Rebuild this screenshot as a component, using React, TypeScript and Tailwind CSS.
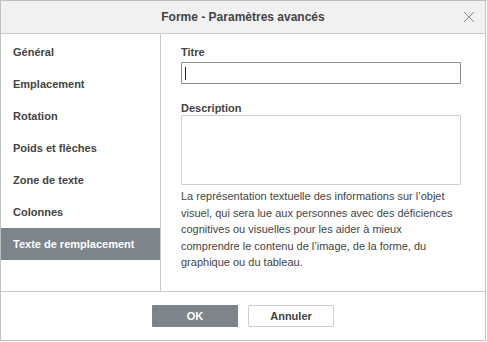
import React from 'react';

const ITEMS = [
  'Général',
  'Emplacement',
  'Rotation',
  'Poids et flèches',
  'Zone de texte',
  'Colonnes',
  'Texte de remplacement',
];

export default function App() {
  const selected = 6;

  return (
    <div className="w-[487px] h-[342px] bg-white" style={{ fontFamily: '"Liberation Sans", Arial, sans-serif' }}>
      <div className="w-[486px] h-[341px] border border-[#c0c0c0] flex flex-col text-[#444]">
        {/* Header */}
        <div className="relative h-[33px] shrink-0 bg-[#f1f1f1] border-b border-[#cbcbcb] flex items-center justify-center">
          <span className="text-[12px] font-bold leading-[14px]">Forme - Paramètres avancés</span>
          <svg className="absolute left-[461px] top-[9px]" width="14" height="14" viewBox="0 0 14 14">
            <path d="M2 2 L12 12 M12 2 L2 12" stroke="#8b8b8b" strokeWidth="1" fill="none" />
          </svg>
        </div>

        {/* Body */}
        <div className="flex flex-1 min-h-0">
          <div className="w-[160px] shrink-0 border-r border-[#cbcbcb] pt-[2px]">
            {ITEMS.map((item, i) => (
              <div
                key={item}
                className={`h-[32px] flex items-center pl-[12px] text-[11px] font-bold ${
                  i === selected ? 'bg-[#7d858c] text-white' : 'text-[#444]'
                }`}
              >
                {item}
              </div>
            ))}
          </div>

          <div className="flex-1 pl-[20px] pt-[12px]">
            <div className="text-[11px] font-bold leading-[13px] mb-[3px]">Titre</div>
            <div className="w-[280px] h-[22px] border border-[#8e8e8e] rounded-[1px] flex items-center pl-[3px]">
              <span className="w-px h-[13px] bg-[#222]" />
            </div>

            <div className="text-[11px] font-bold leading-[13px] mt-[18px]">Description</div>
            <div className="w-[280px] h-[70px] border border-[#cfcfcf] rounded-[1px]" />

            <p className="w-[274px] mt-[3px] text-[11px] leading-[16.5px] text-[#444]">
              La représentation textuelle des informations sur l’objet visuel, qui sera lue aux personnes avec des
              déficiences cognitives ou visuelles pour les aider à mieux comprendre le contenu de l’image, de la forme,
              du graphique ou du tableau.
            </p>
          </div>
        </div>

        {/* Footer */}
        <div className="h-[49px] shrink-0 border-t border-[#cbcbcb] flex items-center justify-center gap-[10px]">
          <button className="w-[86px] h-[22px] bg-[#7d858c] text-white text-[11px] font-bold rounded-[1px]">OK</button>
          <button className="w-[86px] h-[22px] bg-white border border-[#cfcfcf] text-[#444] text-[11px] font-bold rounded-[1px]">
            Annuler
          </button>
        </div>
      </div>
    </div>
  );
}
